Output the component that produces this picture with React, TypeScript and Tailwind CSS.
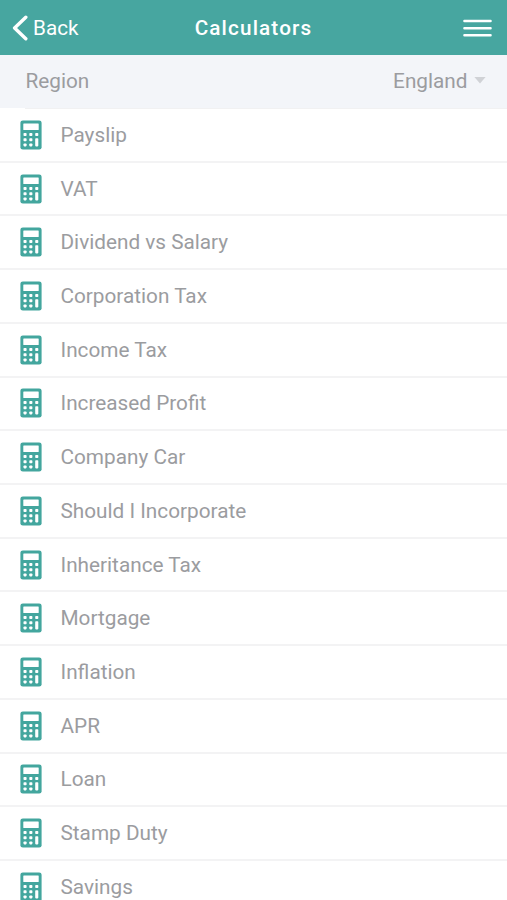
const calculators = [
  "Payslip",
  "VAT",
  "Dividend vs Salary",
  "Corporation Tax",
  "Income Tax",
  "Increased Profit",
  "Company Car",
  "Should I Incorporate",
  "Inheritance Tax",
  "Mortgage",
  "Inflation",
  "APR",
  "Loan",
  "Stamp Duty",
  "Savings",
];

function CalculatorIcon() {
  return (
    <svg
      viewBox="0 0 22 30"
      className="h-[30px] w-[22px] shrink-0"
      aria-hidden="true"
    >
      <rect x="0.4" y="0.4" width="21.2" height="29.2" rx="2.4" fill="#43a69e" />
      <g fill="#fff">
        <rect x="3.3" y="3.4" width="15.4" height="6.6" rx="0.5" />
        <rect x="3.5" y="13" width="3.1" height="3" rx="0.8" />
        <rect x="9.3" y="13" width="3.1" height="3" rx="0.8" />
        <rect x="15.2" y="13" width="3.1" height="3" rx="0.8" />
        <rect x="3.5" y="18.2" width="3.1" height="3" rx="0.8" />
        <rect x="9.3" y="18.2" width="3.1" height="3" rx="0.8" />
        <rect x="3.5" y="23.4" width="3.1" height="3" rx="0.8" />
        <rect x="9.3" y="23.4" width="3.1" height="3" rx="0.8" />
        <rect x="15.2" y="18.2" width="3.1" height="8.2" rx="0.8" />
      </g>
    </svg>
  );
}

function Header() {
  return (
    <header className="grid h-[55px] shrink-0 grid-cols-[1fr_auto_1fr] items-center bg-[#47a6a0] pr-[15px] pl-3 text-white">
      <button type="button" className="flex items-center gap-[5px] text-left">
        <svg
          viewBox="0 0 16 26"
          className="h-[26px] w-4"
          fill="none"
          stroke="currentColor"
          strokeWidth="3.4"
          strokeLinecap="round"
          strokeLinejoin="round"
        >
          <path d="M13.8 2.2 2.6 13 13.8 23.8" />
        </svg>
        <span className="text-[20.7px] leading-6">Back</span>
      </button>
      <h1 className="pl-[3px] text-[20.7px] leading-6 font-medium tracking-[1.15px]">
        Calculators
      </h1>
      <button type="button" aria-label="Menu" className="justify-self-end">
        <svg
          viewBox="0 0 29 18"
          className="block h-[18px] w-[29px]"
          stroke="currentColor"
          strokeWidth="2.4"
          strokeLinecap="round"
        >
          <path d="M1.4 2h26.2M1.4 9.2h26.2M1.4 16.3h26.2" />
        </svg>
      </button>
    </header>
  );
}

function RegionSelect() {
  return (
    <div className="shrink-0">
      <div className="flex h-[53px] items-center justify-between bg-[#f3f5f9] pr-[21px] pb-[1.5px] pl-[25.5px]">
        <span>Region</span>
        <button type="button" className="flex items-center gap-[6.5px]">
          England
          <svg viewBox="0 0 12 7" className="h-[7px] w-3" fill="#d0d2d6">
            <path d="M0.4 0h11.2L6 6.6z" />
          </svg>
        </button>
      </div>
      <div className="ml-[25px] h-px bg-[#f1f1f2]" />
    </div>
  );
}

export default function App() {
  return (
    <div className="flex h-[900px] w-full flex-col overflow-hidden bg-white font-['Roboto',sans-serif] text-[20.75px] leading-6 text-[#9b9ca0]">
      <Header />
      <RegionSelect />
      <ul>
        {calculators.map((name) => (
          <li
            key={name}
            className="flex h-[53.73px] items-center gap-[18.5px] border-b-2 border-[#f3f3f4] pl-5"
          >
            <CalculatorIcon />
            <span>{name}</span>
          </li>
        ))}
      </ul>
    </div>
  );
}
